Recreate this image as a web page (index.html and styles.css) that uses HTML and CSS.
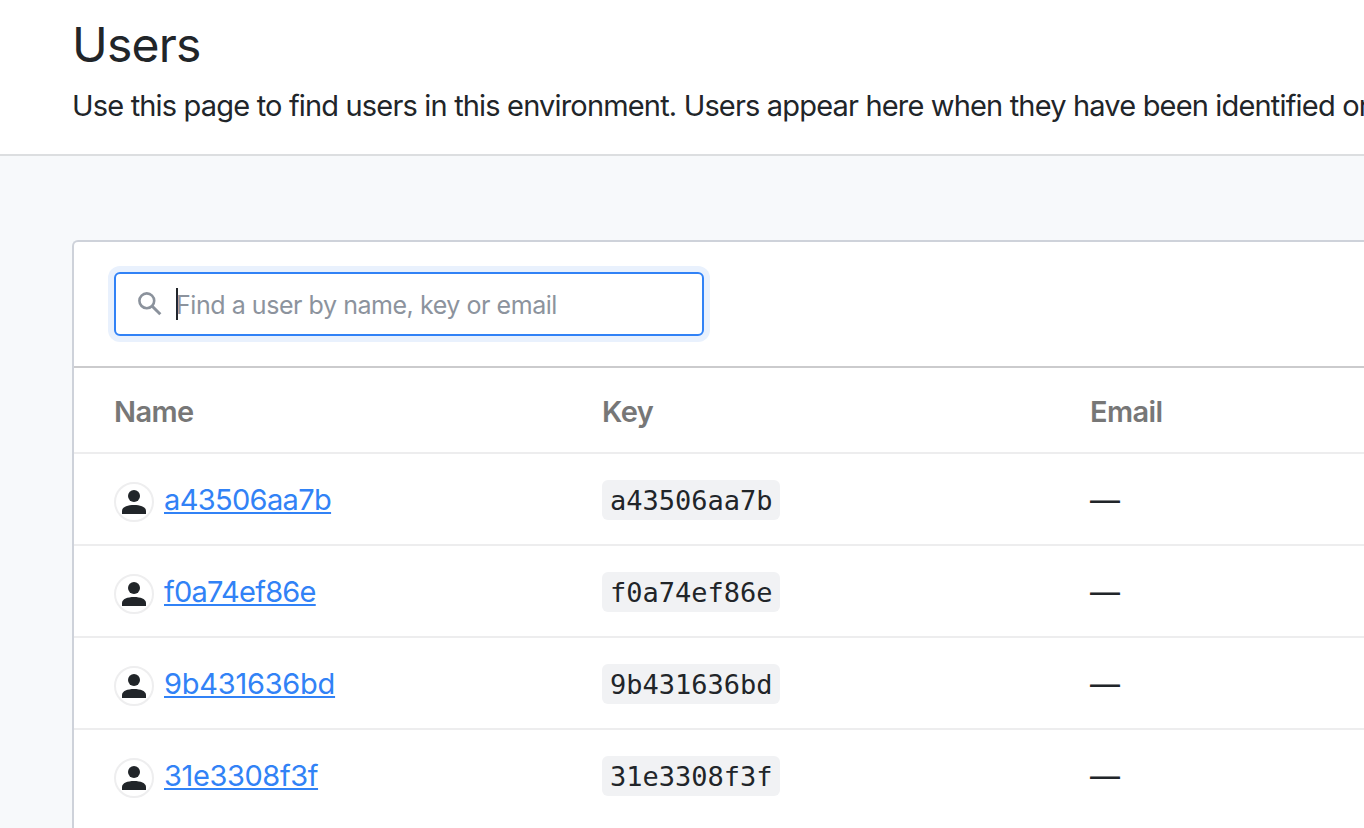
FILE: index.html
```html
<!DOCTYPE html>
<html lang="en">
<head>
<meta charset="utf-8">
<title>Users</title>
<link rel="stylesheet" href="styles.css">
</head>
<body>
<svg class="defs" width="0" height="0"><symbol id="person" viewBox="0 0 24 24"><circle cx="12" cy="6" r="6"/><path d="M0 24v-3C0 17 5.500 15 12 15s12 2 12 6v3z"/></symbol></svg>
<header class="header">
  <h1 class="title">Users</h1>
  <p class="intro">Use this page to find users in this environment. Users appear here when they have been identified or</p>
</header>
<main class="main">
  <section class="card">
    <div class="toolbar">
      <div class="search">
        <svg class="search-icon" viewBox="0 0 24 24"><circle cx="8.800" cy="8.800" r="7.400"/><path class="handle" d="M14 14 22.300 22.300"/></svg>
        <span class="caret"></span><span class="placeholder">Find a user by name, key or email</span>
      </div>
    </div>
    <div class="row head"><span>Name</span><span>Key</span><span>Email</span></div>
    <div class="row"><div class="user"><span class="avatar"><svg><use href="#person"/></svg></span><a class="link" href="#">a43506aa7b</a></div><div><code class="key">a43506aa7b</code></div><span class="email">—</span></div>
    <div class="row"><div class="user"><span class="avatar"><svg><use href="#person"/></svg></span><a class="link snug" href="#">f0a74ef86e</a></div><div><code class="key">f0a74ef86e</code></div><span class="email">—</span></div>
    <div class="row"><div class="user"><span class="avatar"><svg><use href="#person"/></svg></span><a class="link wide" href="#">9b431636bd</a></div><div><code class="key">9b431636bd</code></div><span class="email">—</span></div>
    <div class="row"><div class="user"><span class="avatar"><svg><use href="#person"/></svg></span><a class="link loose" href="#">31e3308f3f</a></div><div><code class="key">31e3308f3f</code></div><span class="email">—</span></div>
  </section>
</main>
</body>
</html>
```
FILE: styles.css
```css
* { box-sizing: border-box; }
body { margin: 0; height: 828px; display: flex; flex-direction: column; overflow: hidden; background: #f7f9fb; color: #212529; font: 29px/40px Inter, sans-serif; }
.defs { display: block; flex: none; }
.header { flex: none; height: 156px; padding: 15px 0 0 72px; background: #fff; border-bottom: 2px solid #dcdee0; white-space: nowrap; overflow: hidden; }
.title { margin: 0; font-size: 48px; line-height: 60px; font-weight: 400; letter-spacing: -0.8px; }
.intro { margin: 11px 0 0; letter-spacing: -0.83px; }
.main { flex: 1; display: flex; min-height: 0; padding: 84px 0 0 72px; }
.card { flex: 1; min-width: 0; background: #fff; border: 2px solid #ced2da; border-width: 2px 0 0 2px; border-radius: 6px 0 0 0; }
.toolbar { height: 126px; padding: 30px 40px; border-bottom: 2px solid #cbcbcd; }
.search { display: flex; align-items: center; width: 590px; height: 64px; padding-left: 22px; background: #fff; border: 2px solid #3182f6; border-radius: 6px; box-shadow: 0 0 0 6px #e9f1fd; }
.search-icon { width: 24px; height: 24px; fill: none; stroke: #8b929c; stroke-width: 2.6; }
.handle { stroke-width: 3; }
.caret { width: 2px; height: 32px; margin-left: 14px; background: #212529; }
.placeholder { margin-left: -2px; padding-top: 2px; color: #8c939d; font-size: 25px; letter-spacing: -0.45px; white-space: nowrap; }
.row { display: grid; grid-template-columns: 488px 488px 1fr; align-items: center; height: 92px; padding: 2px 0 0 40px; border-bottom: 2px solid #ededee; }
.row:last-child { border-bottom-color: transparent; }
.head { height: 86px; padding-top: 4px; color: #777; font-weight: 600; font-size: 29px; letter-spacing: -0.6px; }
.user { display: flex; align-items: center; gap: 10px; }
.avatar { display: flex; align-items: center; justify-content: center; width: 40px; height: 40px; border: 2px solid #eeeeef; border-radius: 50%; margin-top: 4px; }
.avatar svg { width: 24px; height: 24px; fill: #212529; }
.link { color: #3182f6; letter-spacing: -0.65px; text-decoration-thickness: 2px; text-underline-offset: 2px; text-decoration-skip-ink: none; }
.snug { letter-spacing: -0.75px; }
.loose { letter-spacing: -0.4px; }
.wide { letter-spacing: -0.25px; }
.key { display: block; width: 178px; height: 40px; padding: 1px 8px 0; border-radius: 6px; background: #f1f2f4; font: 27px/40px "DejaVu Sans Mono", monospace; }
.email { font-size: 30px; }
```
